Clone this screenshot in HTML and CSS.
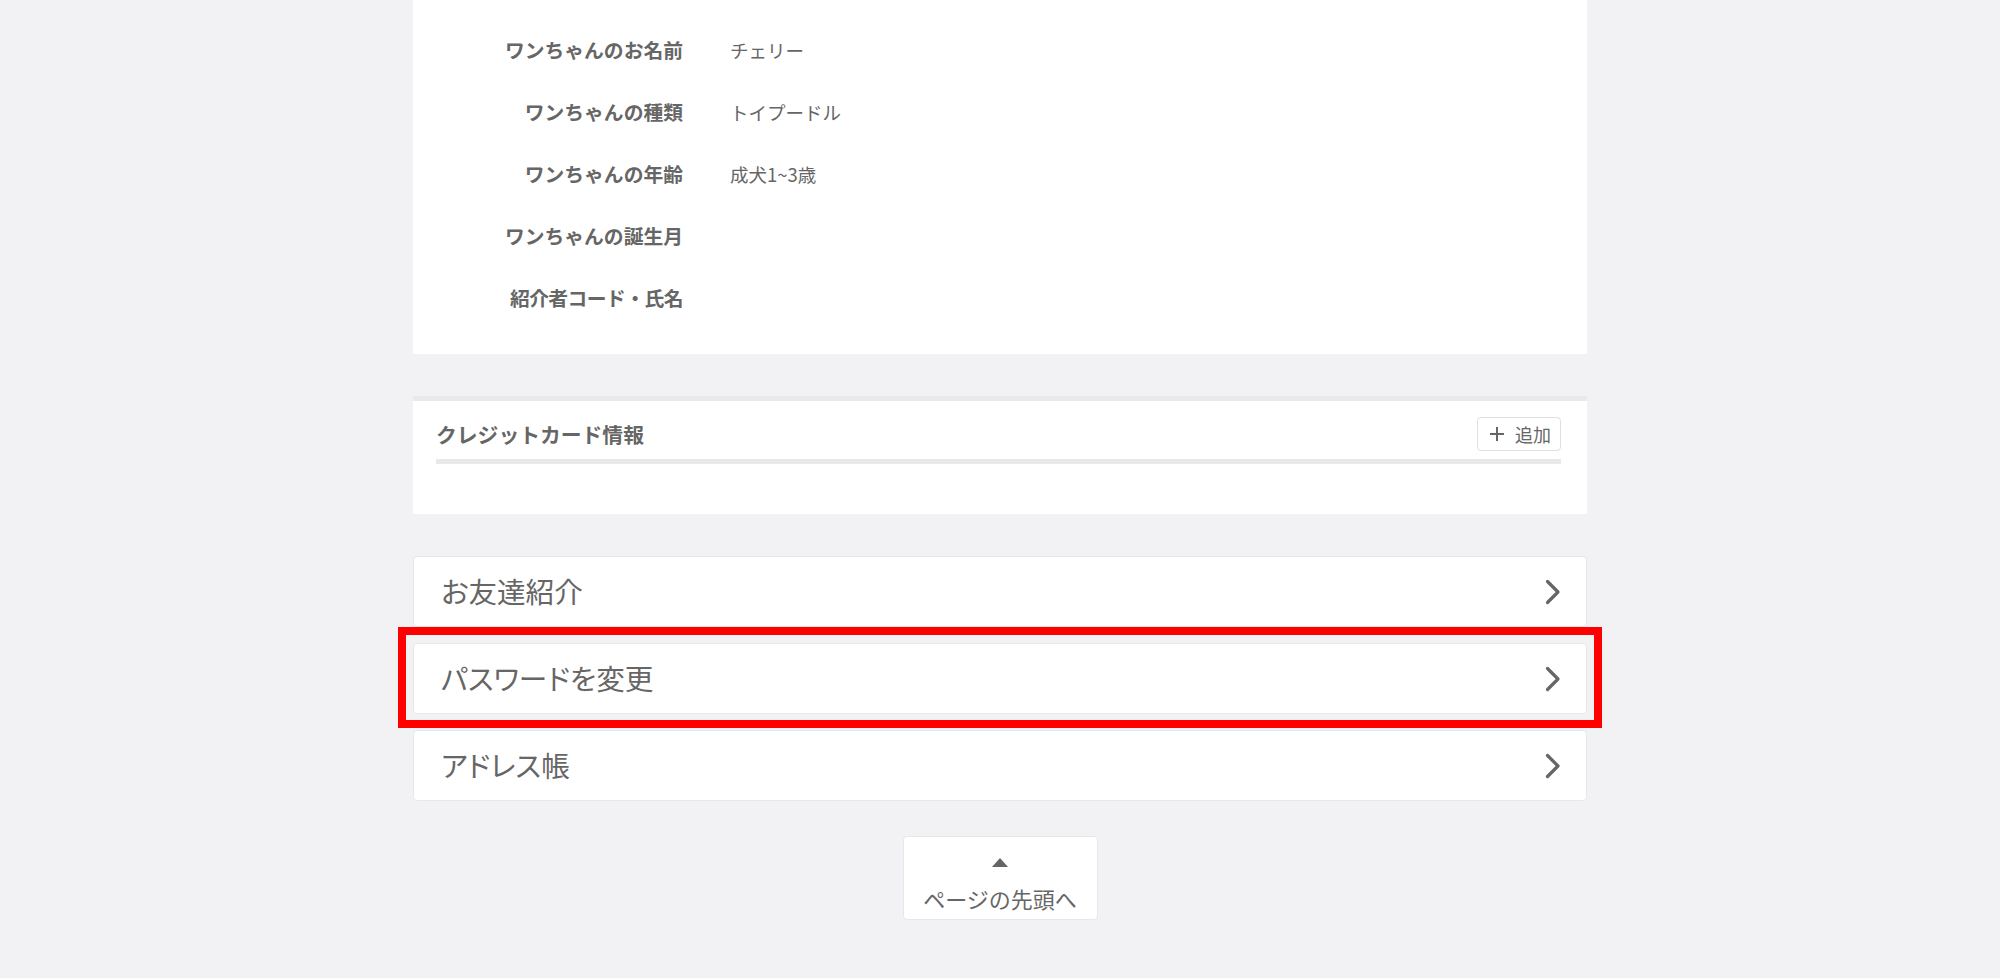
FILE: index.html
```html
<!DOCTYPE html>
<html lang="ja">
<head>
<meta charset="utf-8">
<title>マイページ</title>
<link rel="stylesheet" href="styles.css">
</head>
<body>
<div class="page">
  <section class="card profile">
    <dl class="profile-list">
      <div class="row"><dt>ワンちゃんのお名前</dt><dd>チェリー</dd></div>
      <div class="row"><dt>ワンちゃんの種類</dt><dd>トイプードル</dd></div>
      <div class="row"><dt>ワンちゃんの年齢</dt><dd>成犬1~3歳</dd></div>
      <div class="row"><dt>ワンちゃんの誕生月</dt><dd></dd></div>
      <div class="row"><dt class="tight">紹介者コード・氏名</dt><dd></dd></div>
    </dl>
  </section>

  <section class="card credit">
    <div class="credit-head">
      <h2 class="credit-title">クレジットカード情報</h2>
      <button class="add-btn" type="button">
        <svg class="plus" width="16" height="16" viewBox="0 0 16 16" aria-hidden="true"><path d="M8 1v14M1 8h14" stroke="#666" stroke-width="2" fill="none"/></svg>
        <span>追加</span>
      </button>
    </div>
    <div class="credit-line"></div>
  </section>

  <nav class="menu">
    <a class="menu-item" href="#"><span class="menu-label">お友達紹介</span>
      <svg class="chev" width="16" height="26" viewBox="0 0 16 26" aria-hidden="true"><polyline points="2.5,2.5 13,13 2.5,23.5" fill="none" stroke="#666" stroke-width="3.2" stroke-linecap="round" stroke-linejoin="round"/></svg>
    </a>
    <a class="menu-item highlighted" href="#"><span class="menu-label">パスワードを変更</span>
      <svg class="chev" width="16" height="26" viewBox="0 0 16 26" aria-hidden="true"><polyline points="2.5,2.5 13,13 2.5,23.5" fill="none" stroke="#666" stroke-width="3.2" stroke-linecap="round" stroke-linejoin="round"/></svg>
    </a>
    <a class="menu-item" href="#"><span class="menu-label">アドレス帳</span>
      <svg class="chev" width="16" height="26" viewBox="0 0 16 26" aria-hidden="true"><polyline points="2.5,2.5 13,13 2.5,23.5" fill="none" stroke="#666" stroke-width="3.2" stroke-linecap="round" stroke-linejoin="round"/></svg>
    </a>
  </nav>

  <div class="totop-wrap">
    <a class="totop" href="#"><span class="tri"></span><span class="totop-text">ページの先頭へ</span></a>
  </div>
</div>
</body>
</html>
```

FILE: styles.css
```css
* { box-sizing: border-box; }
html, body {
  margin: 0;
  padding: 0;
  background: #f2f2f4;
  font-family: "Noto Sans CJK JP", "Noto Sans", sans-serif;
  color: #666;
}
.page {
  width: 1174px;
  margin: 0 auto;
  padding-bottom: 60px;
}
.card {
  background: #fff;
}
.profile {
  padding: 19px 0 25px;
}
.profile-list {
  margin: 0;
}
.row {
  display: grid;
  grid-template-columns: 270px 1fr;
  column-gap: 47px;
  align-items: center;
  height: 62px;
}
.row dt {
  text-align: right;
  font-weight: 700;
  font-size: 19.8px;
  line-height: 1;
  color: #666;
}
.row dt.tight {
  letter-spacing: -0.55px;
}
.row dd {
  margin: 0;
  font-size: 18.5px;
  line-height: 1;
  color: #666;
}
.credit {
  margin-top: 42px;
  border-top: 5px solid #e8e9eb;
  padding: 16px 26px 50px 23px;
}
.credit-head {
  display: flex;
  align-items: center;
  justify-content: space-between;
  height: 34px;
}
.credit-title {
  margin: 0;
  font-size: 20.8px;
  font-weight: 700;
  line-height: 1;
  color: #666;
}
.add-btn {
  display: flex;
  align-items: center;
  gap: 10px;
  height: 34px;
  width: 84px;
  padding: 0 0 0 11px;
  background: #fff;
  border: 1px solid #dedfe2;
  border-radius: 4px;
  font-family: inherit;
  font-size: 18px;
  line-height: 1;
  color: #666;
}
.plus { display: block; }
.credit-line {
  margin-top: 8px;
  height: 5px;
  background: #e8e9eb;
}
.menu {
  margin-top: 42px;
  display: flex;
  flex-direction: column;
  gap: 16px;
}
.menu-item {
  position: relative;
  display: flex;
  align-items: center;
  justify-content: space-between;
  height: 71px;
  padding: 0 25px 0 27px;
  background: #fff;
  border: 1px solid #e6e7ea;
  border-radius: 4px;
  font-size: 28.6px;
  line-height: 1;
  color: #666;
  text-decoration: none;
}
.menu-label {
  font-feature-settings: "palt";
}
.chev { display: block; }
.highlighted::after {
  content: "";
  position: absolute;
  top: -17px;
  bottom: -15px;
  left: -16px;
  right: -16px;
  border: 8px solid #ff0000;
  z-index: 1;
  pointer-events: none;
}
.totop-wrap {
  margin-top: 35px;
  display: flex;
  justify-content: center;
}
.totop {
  display: flex;
  flex-direction: column;
  align-items: center;
  width: 195px;
  height: 84px;
  padding: 21px 0 10px;
  background: #fff;
  border: 1px solid #e6e7ea;
  border-radius: 4px;
  text-decoration: none;
  color: #666;
}
.tri {
  width: 0;
  height: 0;
  border-left: 8px solid transparent;
  border-right: 8px solid transparent;
  border-bottom: 9px solid #666;
}
.totop-text {
  margin-top: 20px;
  font-size: 22px;
  line-height: 22px;
  color: #666;
}
```
